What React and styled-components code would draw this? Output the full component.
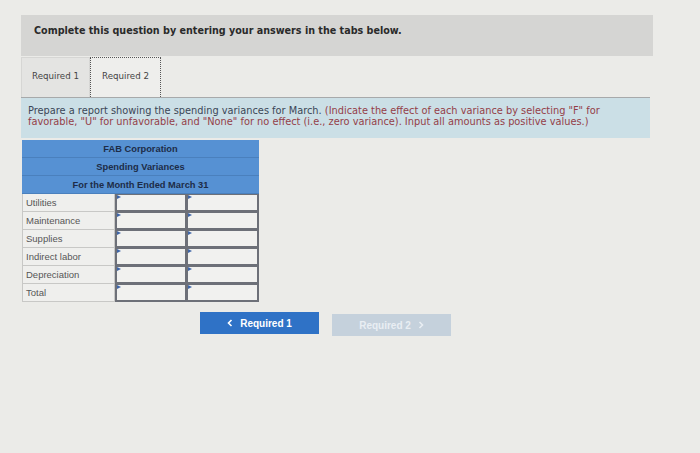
import React from "react";
import styled, { createGlobalStyle } from "styled-components";

const Global = createGlobalStyle`
  html, body { margin: 0; padding: 0; background: #ebebe8; }
  body { font-family: "DejaVu Sans", Verdana, sans-serif; }
`;

const Page = styled.div`
  width: 700px;
  height: 453px;
  box-sizing: border-box;
  padding: 15px 0 0 21px;
  background: #ebebe8;
`;

const Banner = styled.div`
  width: 632px;
  height: 41px;
  box-sizing: border-box;
  background: #d5d5d3;
  padding: 10px 0 0 13px;
  font-weight: bold;
  font-size: 9.6px;
  line-height: 12px;
  color: #2a2a2a;
`;

const TabBar = styled.div`
  display: flex;
  width: 629px;
  margin-top: 1px;
  height: 40px;
  border-bottom: 1px solid #a7a9aa;
`;

const Tab = styled.div`
  width: ${(p) => p.$w}px;
  box-sizing: border-box;
  display: flex;
  align-items: center;
  justify-content: center;
  font-size: 8.7px;
  color: #444;
  padding-bottom: 3px;
  background: ${(p) => (p.$active ? "#eeeeec" : "#e4e4e2")};
  border: ${(p) => (p.$active ? "1px dotted #555" : "1px solid #d6d6d4")};
  border-bottom: none;
`;

const Instructions = styled.div`
  width: 629px;
  height: 40px;
  box-sizing: border-box;
  background: #cbdfe6;
  padding: 7px 0 0 7px;
  font-size: 9.8px;
  line-height: 11px;
  color: #3b4656;
  white-space: nowrap;
`;

const Red = styled.span`
  color: #943e48;
`;

const Table = styled.div`
  width: 237px;
  margin: 2px 0 0 1px;
`;

const HeadRow = styled.div`
  height: 18px;
  box-sizing: border-box;
  background: #5691d3;
  border-bottom: 1px solid #4a80bd;
  display: flex;
  align-items: center;
  justify-content: center;
  font-family: "Liberation Sans", Arial, sans-serif;
  font-size: 9.3px;
  font-weight: bold;
  color: #1d2c47;
`;

const Row = styled.div`
  display: grid;
  grid-template-columns: 93px 72px 72px;
  height: 18px;
`;

const Label = styled.div`
  box-sizing: border-box;
  background: #efefed;
  border: 1px solid #c8c8c6;
  border-top: none;
  padding-left: 3px;
  display: flex;
  align-items: center;
  font-family: "Liberation Sans", Arial, sans-serif;
  font-size: 9.5px;
  color: #565656;
`;

const Cell = styled.div`
  position: relative;
  box-sizing: border-box;
  background: #f1f1ef;
  border: 2px solid #6d7078;
  border-top-width: ${(p) => (p.$first ? "1px" : "2px")};
  margin-top: ${(p) => (p.$first ? "0" : "-1px")};
  margin-left: ${(p) => (p.$right ? "-1px" : "0")};
  &::before {
    content: "";
    position: absolute;
    top: 0;
    left: 0;
    border-left: 4px solid #3f66a8;
    border-top: 2px solid transparent;
    border-bottom: 2px solid transparent;
  }
`;

const Nav = styled.div`
  display: flex;
  gap: 13px;
  margin: 10px 0 0 179px;
  align-items: flex-start;
`;

const NavButton = styled.div`
  width: 119px;
  height: 22px;
  margin-top: ${(p) => (p.$disabled ? "2px" : "0")};
  box-sizing: border-box;
  display: flex;
  align-items: center;
  justify-content: center;
  gap: 7px;
  background: ${(p) => (p.$disabled ? "#c5d1dc" : "#2f72c6")};
  color: ${(p) => (p.$disabled ? "#e9eef3" : "#ffffff")};
  font-family: "Liberation Sans", Arial, sans-serif;
  font-size: 10px;
  font-weight: bold;
`;

const rows = ["Utilities", "Maintenance", "Supplies", "Indirect labor", "Depreciation", "Total"];

function Chevron({ dir }) {
  return (
    <svg width="6" height="8" viewBox="0 0 6 8">
      <path
        d={dir === "left" ? "M4.5 1 L1.5 4 L4.5 7" : "M1.5 1 L4.5 4 L1.5 7"}
        fill="none"
        stroke="currentColor"
        strokeWidth="1.6"
      />
    </svg>
  );
}

export default function App() {
  return (
    <Page>
      <Global />
      <Banner>Complete this question by entering your answers in the tabs below.</Banner>
      <TabBar>
        <Tab $w={69}>Required 1</Tab>
        <Tab $w={71} $active>Required 2</Tab>
      </TabBar>
      <Instructions>
        Prepare a report showing the spending variances for March.{" "}
        <Red>
          (Indicate the effect of each variance by selecting "F" for
          <br />
          favorable, "U" for unfavorable, and "None" for no effect (i.e., zero variance). Input all amounts as
          positive values.)
        </Red>
      </Instructions>
      <Table>
        <HeadRow>FAB Corporation</HeadRow>
        <HeadRow>Spending Variances</HeadRow>
        <HeadRow>For the Month Ended March 31</HeadRow>
        {rows.map((r, i) => (
          <Row key={r}>
            <Label>{r}</Label>
            <Cell $first={i === 0} />
            <Cell $first={i === 0} $right />
          </Row>
        ))}
      </Table>
      <Nav>
        <NavButton>
          <Chevron dir="left" />
          Required 1
        </NavButton>
        <NavButton $disabled>
          Required 2
          <Chevron dir="right" />
        </NavButton>
      </Nav>
    </Page>
  );
}
